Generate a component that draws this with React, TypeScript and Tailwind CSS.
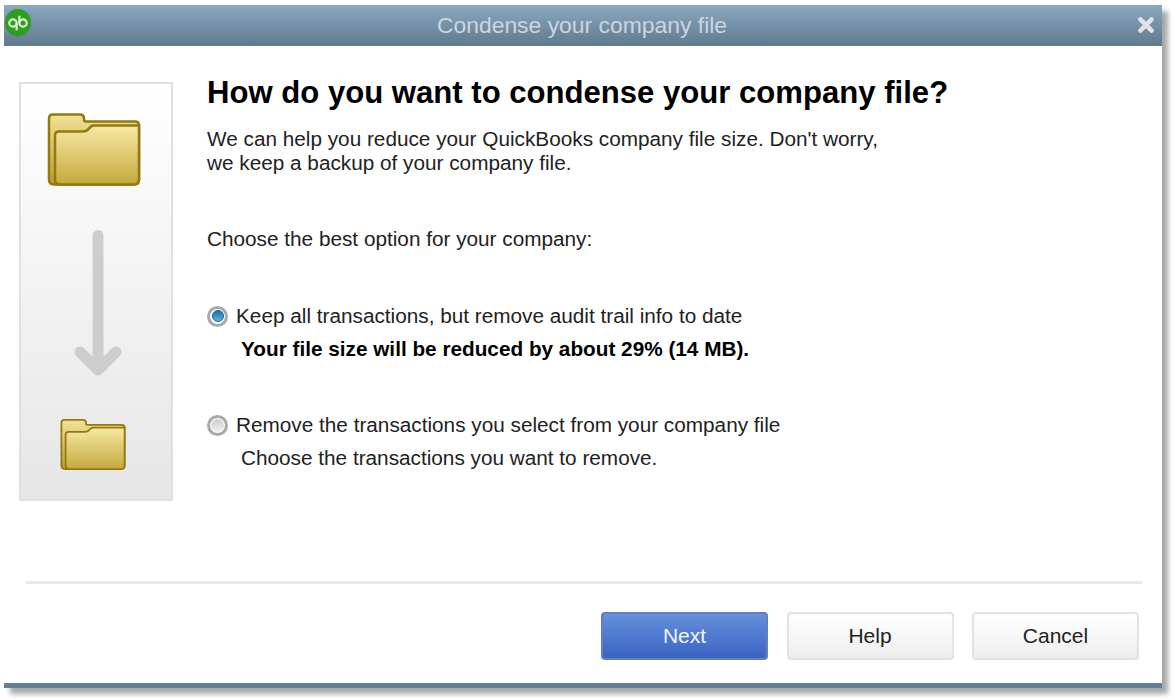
import React from 'react';

const font = { fontFamily: '"Liberation Sans", Arial, sans-serif' };

function Folder({ className }: { className: string }) {
  return (
    <svg viewBox="0 0 94 74" className={className}>
      <defs>
        <linearGradient id="folderFront" x1="0" y1="0" x2="0" y2="1">
          <stop offset="0" stopColor="#f7e8a4" />
          <stop offset="1" stopColor="#c4a93e" />
        </linearGradient>
        <linearGradient id="folderBack" x1="0" y1="0" x2="0" y2="1">
          <stop offset="0" stopColor="#f3e296" />
          <stop offset="1" stopColor="#b89c32" />
        </linearGradient>
      </defs>
      <path
        d="M6 2H33Q37 2 37 6V7Q37 9 39 9H88Q92 9 92 13V67Q92 72 87 72H7Q2 72 2 67V6Q2 2 6 2Z"
        fill="url(#folderBack)"
        stroke="#94790f"
        strokeWidth="2.5"
      />
      <path
        d="M8 67V23Q8 19 12 19H36Q39 19 41 17L44 14Q45 13 47 13H92V67Q92 72 87 72H13Q8 72 8 67Z"
        fill="url(#folderFront)"
        stroke="#94790f"
        strokeWidth="2.5"
      />
    </svg>
  );
}

function Radio({ checked }: { checked?: boolean }) {
  return (
    <span className="flex h-[21px] w-[21px] shrink-0 items-center justify-center rounded-full border-[3px] border-[#a9a9a9] bg-white">
      {checked ? (
        <span className="h-[12px] w-[12px] rounded-full border border-[#1d5f8c] bg-gradient-to-b from-[#1f6c9f] to-[#4fc0e4]" />
      ) : (
        <span className="h-[13px] w-[13px] rounded-full bg-gradient-to-b from-[#c9cbd0] to-[#f0f0f2]" />
      )}
    </span>
  );
}

function Button({ label, primary }: { label: string; primary?: boolean }) {
  return (
    <button
      className={
        primary
          ? 'h-[48px] w-[167px] rounded-[4px] border-2 border-[#5f82bd] bg-gradient-to-b from-[#6590dc] to-[#3c63c3] text-[21px] text-[#f2f6ff]'
          : 'h-[48px] w-[167px] rounded-[4px] border-2 border-[#e2e2e2] bg-gradient-to-b from-[#ffffff] to-[#eeeeee] text-[21px] text-[#222222]'
      }
    >
      {label}
    </button>
  );
}

export default function App() {
  return (
    <div className="h-[700px] w-[1175px] overflow-hidden bg-white pl-1 pt-[5px]" style={font}>
      <div className="flex h-[683px] w-[1158px] flex-col bg-white shadow-[6px_6px_5px_rgba(0,0,0,0.35)]">
        <header className="relative flex h-[41px] shrink-0 items-center justify-center bg-gradient-to-b from-[#8ba9c0] to-[#60798f] pr-[2px] text-[22.9px] text-[#c9d6df]">
          Condense your company file
          <span className="absolute left-[1px] top-[4px] flex h-[27px] w-[26px] items-center justify-center rounded-full bg-[#2ca01c]">
            <svg viewBox="0 0 24 24" className="h-[22px] w-[22px]" fill="none" stroke="#e6f5e0" strokeWidth="2.3">
              <circle cx="6.5" cy="12" r="4" />
              <path d="M10.5 12V20" />
              <circle cx="17.5" cy="12" r="4" />
              <path d="M13.5 12V4" />
            </svg>
          </span>
          <svg viewBox="0 0 16 16" className="absolute right-[7px] top-[11px] h-[18px] w-[18px]" stroke="#dfe3e6" strokeWidth="4" strokeLinecap="round">
            <path d="M3 3L13 13M13 3L3 13" />
          </svg>
        </header>

        <main className="flex flex-1 flex-col">
          <div className="flex flex-1">
            <aside className="ml-[15px] mt-9 flex h-[419px] w-[154px] shrink-0 flex-col items-center border-2 border-[#e0e0e0] bg-gradient-to-b from-white to-[#e6e6e6]">
              <Folder className="ml-[-4px] mt-[28px] h-[75px] w-[94px]" />
              <svg viewBox="0 0 60 150" className="ml-[3px] mt-[43px] h-[150px] w-[60px]" fill="none" stroke="#cdcdcd" strokeWidth="11" strokeLinecap="round" strokeLinejoin="round">
                <path d="M30 5.5V140M12 122L30 140L48 122" />
              </svg>
              <Folder className="ml-[-6px] mt-[38px] h-[53px] w-[66px]" />
            </aside>

            <section className="ml-[34px] mt-[27px] flex-1 text-[20.75px] leading-[24px] text-[#222222]">
              <h1 className="text-[31.1px] font-bold leading-[40px] text-black">How do you want to condense your company file?</h1>
              <p className="mt-[14px]">
                We can help you reduce your QuickBooks company file size. Don't worry,
                <br />
                we keep a backup of your company file.
              </p>
              <p className="mt-[52px]">Choose the best option for your company:</p>

              <div className="mt-[53px] flex items-center gap-[8px]">
                <Radio checked />
                <span>Keep all transactions, but remove audit trail info to date</span>
              </div>
              <p className="ml-[34px] mt-[9px] font-bold text-black">Your file size will be reduced by about 29% (14 MB).</p>

              <div className="mt-[52px] flex items-center gap-[8px]">
                <Radio />
                <span>Remove the transactions you select from your company file</span>
              </div>
              <p className="ml-[34px] mt-[9px]">Choose the transactions you want to remove.</p>
            </section>
          </div>

          <div className="ml-[22px] mr-[20px] h-[3px] bg-[#e8e8e8]" />
          <footer className="flex justify-end gap-[18.5px] pb-[23px] pl-[22px] pr-[23px] pt-[28px]">
            <Button label="Next" primary />
            <Button label="Help" />
            <Button label="Cancel" />
          </footer>
        </main>

        <div className="h-[5px] shrink-0 bg-[#647f95]" />
      </div>
    </div>
  );
}
